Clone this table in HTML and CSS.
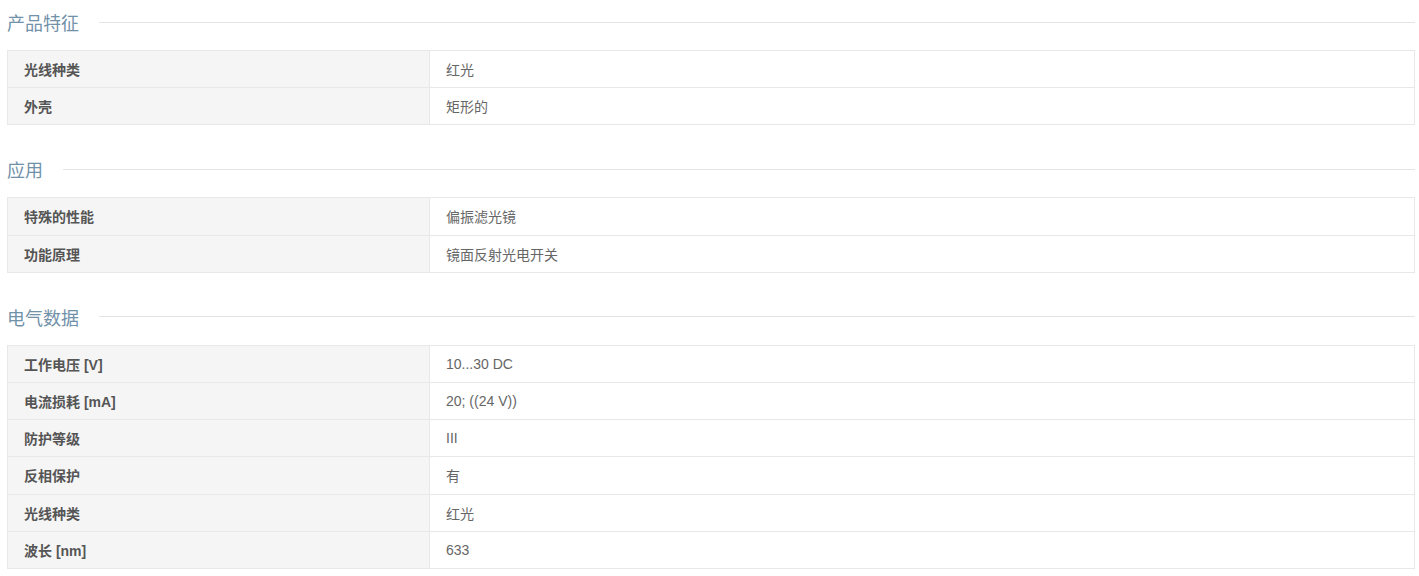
FILE: index.html
```html
<!DOCTYPE html>
<html>
<head>
  <meta charset="utf-8">
  <link rel="stylesheet" href="styles.css">
</head>
<body>
  <div class="specs">
    <div class="section-title"><span>产品特征</span></div>
    <table class="spec-table">
      <tr><td class="label">光线种类</td><td>红光</td></tr>
      <tr><td class="label">外壳</td><td>矩形的</td></tr>
    </table>

    <div class="section-title"><span>应用</span></div>
    <table class="spec-table">
      <tr><td class="label">特殊的性能</td><td>偏振滤光镜</td></tr>
      <tr><td class="label">功能原理</td><td>镜面反射光电开关</td></tr>
    </table>

    <div class="section-title"><span>电气数据</span></div>
    <table class="spec-table">
      <tr><td class="label">工作电压 [V]</td><td>10...30 DC</td></tr>
      <tr><td class="label">电流损耗 [mA]</td><td>20; ((24 V))</td></tr>
      <tr><td class="label">防护等级</td><td>III</td></tr>
      <tr><td class="label">反相保护</td><td>有</td></tr>
      <tr><td class="label">光线种类</td><td>红光</td></tr>
      <tr><td class="label">波长 [nm]</td><td>633</td></tr>
    </table>
  </div>
</body>
</html>
```

FILE: styles.css
```css
* {
  font-family: "Liberation Sans", "Noto Sans CJK SC", sans-serif;
}

body {
  margin: 0;
  background: #fff;
}

.specs {
  padding: 0 4px 0 7px;
}

.section-title {
  display: flex;
  align-items: center;
  height: 44px;
  margin: 22px 0 6px 0;
  color: #7191a9;
  font-size: 18px;
}

.section-title:first-child {
  margin-top: 0;
}

.section-title::after {
  content: "";
  flex: 1;
  height: 1px;
  margin-left: 20px;
  background: #e4e4e4;
}

.spec-table {
  width: 100%;
  border-collapse: collapse;
  font-size: 14px;
  color: #666;
}

.spec-table td {
  border: 1px solid #e8e8e8;
  height: 37.2px;
  padding: 0 16px;
  box-sizing: border-box;
}

.spec-table td.label {
  width: 422px;
  background: #f5f5f5;
  color: #555;
  font-weight: bold;
}
```
